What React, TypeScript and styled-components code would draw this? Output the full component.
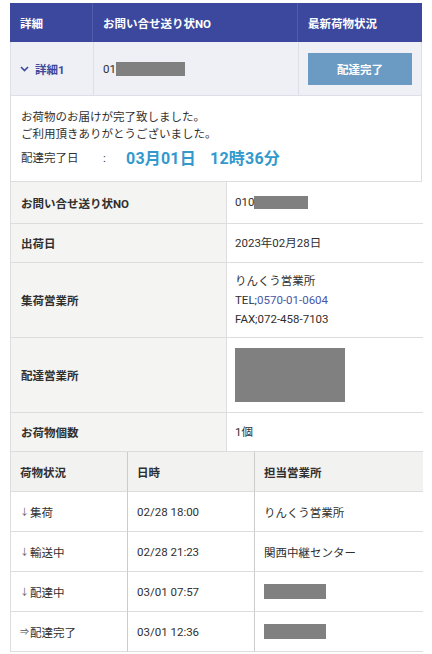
import React from "react"
import styled, { createGlobalStyle } from "styled-components"

const GlobalStyle = createGlobalStyle`
  html, body {
    margin: 0;
    padding: 0;
    background: #ffffff;
  }
  body {
    font-family: Roboto, "Noto Sans CJK JP", sans-serif;
    font-size: 11.5px;
    color: #2f2f2f;
  }
`

const Page = styled.div`
  margin: 3px 10px 0 10px;
  width: 412px;
`

const HeadRow = styled.div`
  display: grid;
  grid-template-columns: 83px 205px 124px;
  height: 39px;
  background: #3c489d;
  color: #ffffff;
  font-weight: 700;
`

const HeadCell = styled.div`
  display: flex;
  align-items: center;
  padding-left: 10px;
  border-right: 1px solid rgba(255, 255, 255, 0.12);
  &:last-child {
    border-right: none;
  }
`

const SummaryRow = styled.div`
  display: grid;
  grid-template-columns: 83px 205px 124px;
  height: 54px;
  background: #eef0f6;
  border-left: 1px solid #dcdfe8;
  border-right: 1px solid #dcdfe8;
  border-bottom: 1px solid #dcdfe8;
  box-sizing: border-box;
`

const SummaryCell = styled.div`
  display: flex;
  align-items: center;
  padding-left: 9px;
  border-right: 1px solid #dcdfe8;
  &:last-child {
    border-right: none;
  }
`

const DetailToggle = styled.span`
  display: flex;
  align-items: center;
  gap: 6px;
  color: #3b4a9c;
  font-weight: 700;
`

const Redacted = styled.span<{ $w: number; $h: number }>`
  display: inline-block;
  width: ${(p) => p.$w}px;
  height: ${(p) => p.$h}px;
  background: #808080;
  vertical-align: middle;
`

const StatusButton = styled.button`
  width: 104px;
  height: 32px;
  border: none;
  background: #6b9ac3;
  color: #ffffff;
  font-family: inherit;
  font-size: 11.5px;
  font-weight: 700;
`

const Message = styled.div`
  border-left: 1px solid #dddddd;
  border-right: 1px solid #dddddd;
  border-bottom: 1px solid #dddddd;
  padding: 13px 10px 0 10px;
  height: 86px;
  box-sizing: border-box;
  line-height: 17px;
`

const DateLine = styled.div`
  display: flex;
  align-items: center;
  margin-top: 7px;
`

const DateLabel = styled.span`
  width: 82px;
`

const DateColon = styled.span`
  width: 23px;
`

const DateValue = styled.span`
  color: #3399cc;
  font-size: 16px;
  font-weight: 700;
  word-spacing: 10px;
  letter-spacing: 0.2px;
`

const InfoTable = styled.div`
  display: grid;
  grid-template-columns: 216px 196px;
  border-left: 1px solid #dddddd;
  border-right: 1px solid #dddddd;
`

const InfoLabel = styled.div<{ $h: number }>`
  height: ${(p) => p.$h}px;
  box-sizing: border-box;
  display: flex;
  align-items: center;
  padding-left: 10px;
  background: #f4f4f2;
  font-weight: 700;
  border-bottom: 1px solid #dddddd;
  border-right: 1px solid #dddddd;
`

const InfoValue = styled.div<{ $h: number }>`
  height: ${(p) => p.$h}px;
  box-sizing: border-box;
  display: flex;
  flex-direction: column;
  justify-content: center;
  padding-left: 8px;
  background: #ffffff;
  border-bottom: 1px solid #dddddd;
  line-height: 19px;
`

const Tel = styled.a`
  color: #4a57a6;
  text-decoration: none;
`

const HistoryTable = styled.div`
  display: grid;
  grid-template-columns: 117px 127px 168px;
  border-left: 1px solid #dddddd;
  border-right: 1px solid #dddddd;
`

const HistoryCell = styled.div<{ $head?: boolean }>`
  height: 40px;
  box-sizing: border-box;
  display: flex;
  align-items: center;
  padding-left: 9px;
  background: ${(p) => (p.$head ? "#f2f2f1" : "#ffffff")};
  font-weight: ${(p) => (p.$head ? 700 : 400)};
  border-bottom: 1px solid #dddddd;
  border-right: 1px solid #cccccc;
  &:nth-child(3n) {
    border-right: none;
  }
`

const Arrow = styled.span`
  font-size: 9px;
  color: #555555;
  margin-right: 1px;
`

function Chevron() {
  return (
    <svg width="9" height="6" viewBox="0 0 9 6" fill="none">
      <path d="M1 1l3.5 3.5L8 1" stroke="#3b4a9c" strokeWidth="1.6" />
    </svg>
  )
}

type HistoryItem = {
  arrow: string
  status: string
  time: string
  office: string | null
}

const history: HistoryItem[] = [
  { arrow: "↓", status: "集荷", time: "02/28 18:00", office: "りんくう営業所" },
  { arrow: "↓", status: "輸送中", time: "02/28 21:23", office: "関西中継センター" },
  { arrow: "↓", status: "配達中", time: "03/01 07:57", office: null },
  { arrow: "⇒", status: "配達完了", time: "03/01 12:36", office: null },
]

export default function App() {
  return (
    <Page>
      <GlobalStyle />
      <HeadRow>
        <HeadCell>詳細</HeadCell>
        <HeadCell>お問い合せ送り状NO</HeadCell>
        <HeadCell>最新荷物状況</HeadCell>
      </HeadRow>
      <SummaryRow>
        <SummaryCell>
          <DetailToggle>
            <Chevron />
            詳細1
          </DetailToggle>
        </SummaryCell>
        <SummaryCell>
          01
          <Redacted $w={69} $h={14} />
        </SummaryCell>
        <SummaryCell>
          <StatusButton>配達完了</StatusButton>
        </SummaryCell>
      </SummaryRow>
      <Message>
        <div>お荷物のお届けが完了致しました。</div>
        <div>ご利用頂きありがとうございました。</div>
        <DateLine>
          <DateLabel>配達完了日</DateLabel>
          <DateColon>:</DateColon>
          <DateValue>03月01日 12時36分</DateValue>
        </DateLine>
      </Message>
      <InfoTable>
        <InfoLabel $h={42}>お問い合せ送り状NO</InfoLabel>
        <InfoValue $h={42}>
          <div>
            010
            <Redacted $w={54} $h={13} />
          </div>
        </InfoValue>
        <InfoLabel $h={39}>出荷日</InfoLabel>
        <InfoValue $h={39}>2023年02月28日</InfoValue>
        <InfoLabel $h={75}>集荷営業所</InfoLabel>
        <InfoValue $h={75}>
          <div>りんくう営業所</div>
          <div>
            TEL;<Tel href="#">0570-01-0604</Tel>
          </div>
          <div>FAX;072-458-7103</div>
        </InfoValue>
        <InfoLabel $h={75}>配達営業所</InfoLabel>
        <InfoValue $h={75}>
          <Redacted $w={110} $h={54} />
        </InfoValue>
        <InfoLabel $h={39}>お荷物個数</InfoLabel>
        <InfoValue $h={39}>1個</InfoValue>
      </InfoTable>
      <HistoryTable>
        <HistoryCell $head>荷物状況</HistoryCell>
        <HistoryCell $head>日時</HistoryCell>
        <HistoryCell $head>担当営業所</HistoryCell>
        {history.map((h) => (
          <React.Fragment key={h.time}>
            <HistoryCell>
              <Arrow>{h.arrow}</Arrow>
              {h.status}
            </HistoryCell>
            <HistoryCell>{h.time}</HistoryCell>
            <HistoryCell>
              {h.office ?? <Redacted $w={62} $h={15} />}
            </HistoryCell>
          </React.Fragment>
        ))}
      </HistoryTable>
    </Page>
  )
}
